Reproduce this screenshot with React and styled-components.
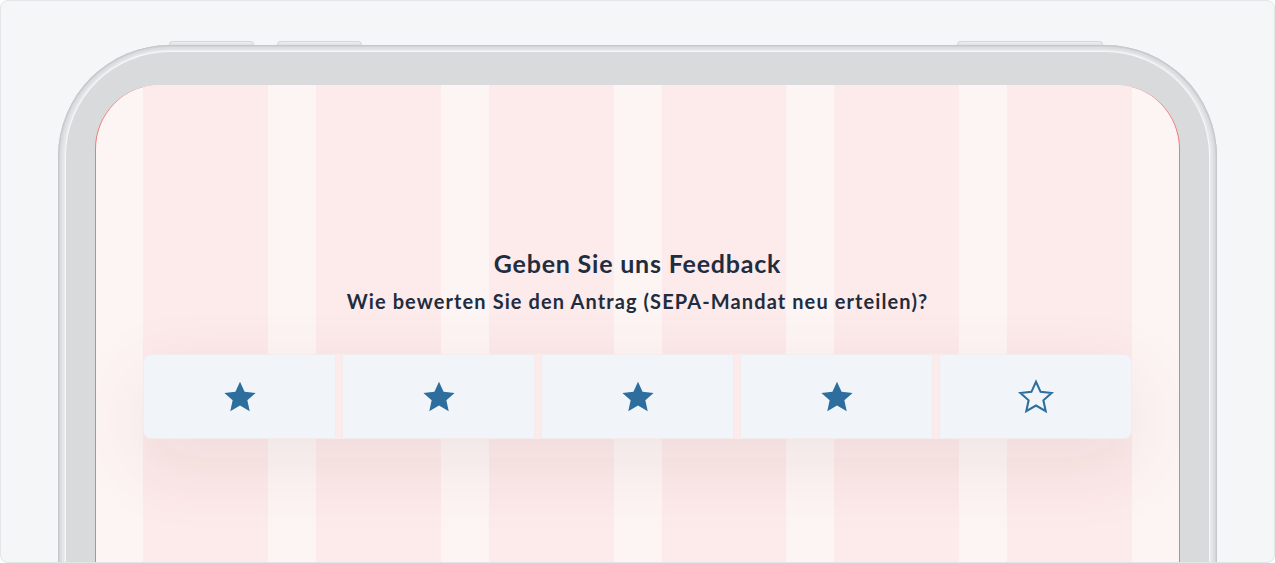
import React from 'react';
import styled, { createGlobalStyle } from 'styled-components';

const GlobalStyle = createGlobalStyle`
  html, body {
    margin: 0;
    padding: 0;
    background: #ffffff;
  }
  body {
    font-family: Lato, "Open Sans", sans-serif;
  }
`;

const STAR_PATH =
  'M12 2.4l2.9 6.35 6.95.7-5.2 4.65 1.5 6.85L12 17.4l-6.15 3.55 1.5-6.85-5.2-4.65 6.95-.7z';

const Star = ({ filled }) => (
  <svg width="38" height="38" viewBox="0 0 24 24">
    <path
      d={STAR_PATH}
      fill={filled ? '#2d6e9e' : 'none'}
      stroke="#2d6e9e"
      strokeWidth={filled ? 0 : 1.3}
      strokeLinejoin="miter"
    />
  </svg>
);

const ratings = [1, 2, 3, 4, 5];
const selected = 4;

export default function App() {
  return (
    <>
      <GlobalStyle />
      <Frame>
        <Phone>
          <SideButton style={{ left: 111, width: 85 }} />
          <SideButton style={{ left: 219, width: 85 }} />
          <SideButton style={{ left: 899, width: 146 }} />
          <Bezel>
            <Screen>
              <GridOverlay>
                {ratings.concat(6).map(i => (
                  <GridColumn key={i} />
                ))}
              </GridOverlay>
              <Content>
                <Title>Geben Sie uns Feedback</Title>
                <Question>Wie bewerten Sie den Antrag (SEPA-Mandat neu erteilen)?</Question>
                <RatingRow>
                  {ratings.map(r => (
                    <RatingButton key={r} aria-label={`${r} Sterne`}>
                      <Star filled={r <= selected} />
                    </RatingButton>
                  ))}
                </RatingRow>
              </Content>
            </Screen>
          </Bezel>
        </Phone>
      </Frame>
    </>
  );
}

const Frame = styled.div`
  box-sizing: border-box;
  height: 563px;
  width: 1275px;
  background: #f5f6f8;
  border: 1px solid #e3e5e9;
  border-radius: 8px;
  overflow: hidden;
  padding: 44px 57px 0;
`;

const Phone = styled.div`
  position: relative;
  height: 640px;
  padding: 7px 8px 0;
  border-radius: 112px 112px 0 0;
  background: #e4e5e7;
  box-shadow: inset 0 0 0 1px #c6c7ca, inset 0 0 0 2px #d2d3d6,
    inset 0 0 0 4px #dcdde0;
`;

const SideButton = styled.div`
  position: absolute;
  top: -4px;
  height: 4px;
  box-sizing: border-box;
  border-radius: 4px 4px 0 0;
  background: linear-gradient(to bottom, #eeeff0, #dfe0e2);
  border: 1px solid #d6d7da;
  border-bottom: none;
`;

const Bezel = styled.div`
  height: 100%;
  box-sizing: border-box;
  padding: 33px 29px 0;
  border-radius: 104px 104px 0 0;
  background: #d9dadc;
  box-shadow: 0 0 0 1px #f7f7f8, 0 0 0 2px #ebebed;
`;

const Screen = styled.div`
  position: relative;
  height: 100%;
  overflow: hidden;
  background: #fdf5f4;
  border-left: 1px solid #f07878;
  border-right: 1px solid #f07878;
  border-radius: 64px 64px 0 0;
`;

const GridOverlay = styled.div`
  position: absolute;
  inset: 0;
  padding: 0 47px;
  display: grid;
  grid-template-columns: repeat(6, 1fr);
  column-gap: 48px;
`;

const GridColumn = styled.div`
  background: #fdeaea;
`;

const Content = styled.div`
  position: relative;
  z-index: 1;
  display: flex;
  flex-direction: column;
  align-items: center;
  padding: 163px 47px 0;
`;

const Title = styled.h1`
  margin: 0;
  font-size: 25px;
  line-height: 30px;
  font-weight: 700;
  letter-spacing: 0.8px;
  color: #1e2d3f;
`;

const Question = styled.p`
  margin: 10px 0 0;
  font-size: 20px;
  line-height: 26px;
  font-weight: 700;
  letter-spacing: 1.1px;
  color: #1e2d3f;
`;

const RatingRow = styled.div`
  align-self: stretch;
  margin-top: 40px;
  display: flex;
  gap: 6px;
  border-radius: 8px;
  box-shadow: 0 24px 70px 10px rgba(90, 40, 40, 0.07);
`;

const RatingButton = styled.button`
  flex: 1;
  height: 85px;
  display: flex;
  align-items: center;
  justify-content: center;
  background: #f1f5f9;
  border: 1px solid #f3ecec;
  padding: 0;
  cursor: pointer;

  &:first-child {
    border-radius: 8px 0 0 8px;
  }

  &:last-child {
    border-radius: 0 8px 8px 0;
  }
`;
